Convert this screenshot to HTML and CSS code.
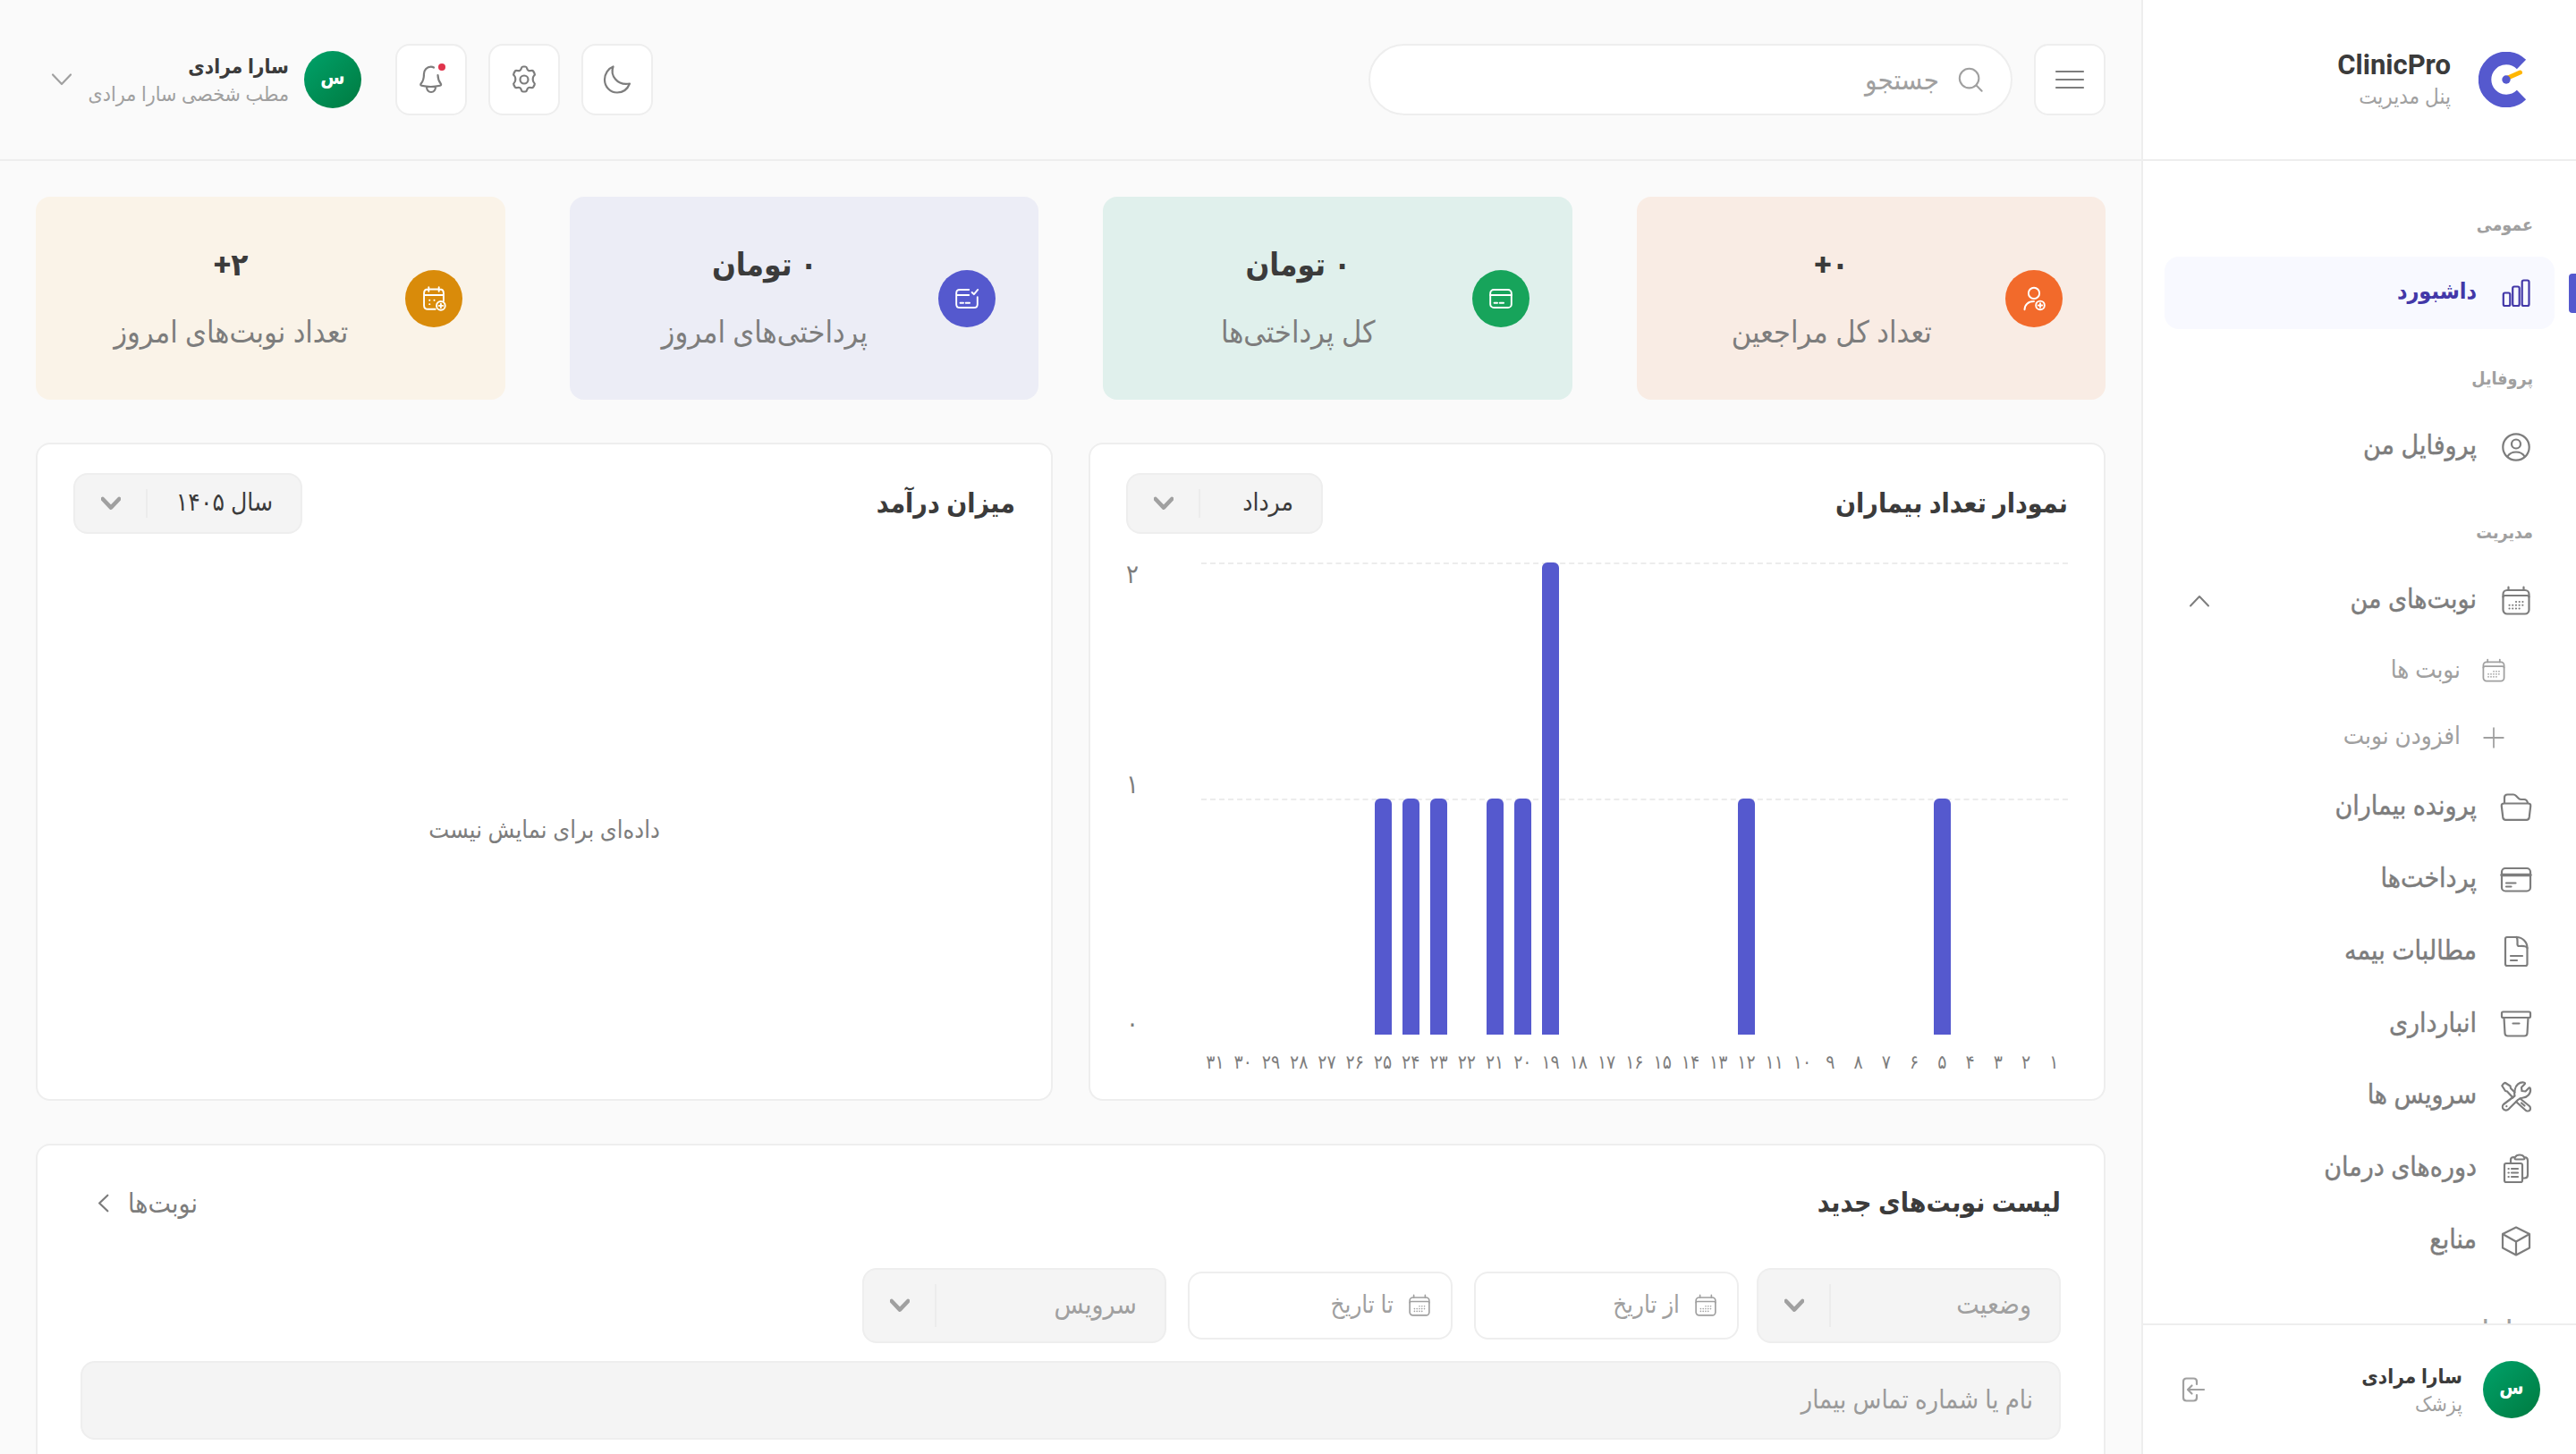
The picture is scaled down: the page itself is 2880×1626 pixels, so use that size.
FILE: index.html
```html
<!DOCTYPE html>
<html lang="fa" dir="rtl">
<head>
    <meta charset="UTF-8">
    <meta name="viewport" content="width=device-width, initial-scale=1.0">
    <title>ClinicPro</title>
    <link rel="stylesheet" href="styles.css">
</head>
<body>
    <!-- Icons -->
    <svg class="sprite" aria-hidden="true">
        <symbol id="i-chart" viewBox="0 0 40 40"><rect x="5.800" y="19.500" width="7.500" height="14.500" rx="1.800"/><rect x="16.200" y="12.500" width="7.500" height="21.500" rx="1.800"/><rect x="26.700" y="5.500" width="7.800" height="28.500" rx="1.800"/></symbol>
        <symbol id="i-profile" viewBox="0 0 40 40"><circle cx="20" cy="20" r="14.700"/><circle cx="20" cy="16.500" r="5"/><path d="M10.500 30.500C12.500 27 16 25.500 20 25.500s7.500 1.500 9.500 5"/></symbol>
        <symbol id="i-calendar" viewBox="0 0 40 40"><rect x="5.500" y="8" width="29" height="26.500" rx="4.500"/><path d="M11.500 4.500V8M28.500 4.500V8M5.500 15.500c0-1 1-1.500 2-1.500h25c1 0 2 .5 2 1.500"/><path class="dots" d="M12.500 28.500h11.500M12.500 24.800h15.500M20 21h8"/></symbol>
        <symbol id="i-plus" viewBox="0 0 40 40"><path d="M20 6.500v27M6.500 20h27"/></symbol>
        <symbol id="i-folder" viewBox="0 0 40 40"><path d="M7 15V9c0-2 1-3.500 3.500-3.500h6.500c1.500 0 2 .5 3 1.500l3 3c1 1 1.700 1 3 1h3c2.500 0 3.500 1.500 4 4"/><path d="M6.500 15.500h27c2 0 3 1 2.700 3l-1.500 12.500c-.3 2-1.200 2.800-3 2.800H8.300c-1.800 0-2.700-.8-3-2.800L3.800 18.500c-.3-2 .7-3 2.700-3z"/></symbol>
        <symbol id="i-card" viewBox="0 0 40 40"><rect x="4" y="7" width="32" height="25.500" rx="4"/><path class="thick" d="M4 14.500h32"/><path d="M9 23.500h10.500M9 27.500h5.500"/></symbol>
        <symbol id="i-file" viewBox="0 0 40 40"><path d="M10 4h10.500C27 4 32.500 9.500 32.500 16v18c0 1-.8 2-2 2H10c-1.200 0-2-1-2-2V6c0-1.200.8-2 2-2z"/><path d="M20.500 4c1.500 2 1 4 1 8 0 1.500.5 2 2 2 4 0 7.500-.5 9 2M14 25h13M14 30h7"/></symbol>
        <symbol id="i-box" viewBox="0 0 40 40"><rect x="4" y="6.500" width="32" height="6.500" rx="1.500"/><path d="M6.500 13l1 17.500c.1 2 1.200 3 3.200 3h18.600c2 0 3.100-1 3.200-3l1-17.500M16.500 19.500h7"/></symbol>
        <symbol id="i-tools" viewBox="0 0 40 40"><path d="M18.500 19.500c-.8-2.500-.3-4.500.2-7 .8-4.800 5-8.700 9.800-8 1.500.2 2 1 1 2l-3.500 3.500.5 4 4 .5 3.500-3.500c1-1 1.800-.5 2 1 .7 5-3.500 9-8 9.500-2.500.3-4 .5-6 2.500L11.500 34.500c-1.500 1.500-4 1.500-5.500 0s-1.500-4 0-5.500z"/><path d="M16.500 21.500l-6.500-7-2-.5L4.500 8.500c-.5-.8 2.500-4 3.500-3.500l5.500 3.500.5 2.500 4.500 4.500M24.500 22.500L35 31c1.500 1.500 1 4 .2 4.700-1.200 1.200-3.500 1-4.700-.2L20 26M26 27.500l3.500 3M9.300 31.200h.1"/></symbol>
        <symbol id="i-clipboard" viewBox="0 0 40 40"><rect x="7" y="14" width="20" height="21" rx="2"/><path d="M14 14v-4c0-2 1.500-3 3.500-3M29 7c2.500 0 4 1.500 4 4v16c0 2-1.500 3.500-3.500 3.500H27M20 9.500c-1.500 0-2-1-1-2.500 1-2 2.500-2.500 5-2.500s4 .5 5 2.500c.8 1.500.5 2.500-1 2.500zM11.500 20h.3M11.500 24.500h.3M11.500 29h.3M15 20h7M15 24.500h7M15 29h7"/></symbol>
        <symbol id="i-cube" viewBox="0 0 40 40"><path d="M20 4.500L35 12v15.500L20 35.500 5 27.500V12zM5 12l15 8.500L35 12M20 20.500v15"/></symbol>
        <symbol id="i-logout" viewBox="0 0 32 32"><path d="M20 10V7c0-2-1-3.500-3.500-3.500H8.500C6 3.500 5 5 5 7v18c0 2 1 3.500 3.500 3.500h8c2.500 0 3.500-1.500 3.500-3.500v-3M28 16H10.500M14.500 11.500L10 16l4.500 4.500"/></symbol>
        <symbol id="i-menu" viewBox="0 0 40 40"><path d="M5 11h30M5 20h30M5 29h30"/></symbol>
        <symbol id="i-search" viewBox="0 0 32 32"><circle cx="14.500" cy="14.500" r="11.500"/><path d="M23 23l6.500 6.500"/></symbol>
        <symbol id="i-moon" viewBox="0 0 32 32"><path d="M11.500 1.500C8 11 15.500 23 30 20.500 27 28 21.500 30.500 16 30.500 8 30.500 2 24 2 16 2 9.500 6 3.500 11.500 1.500z"/></symbol>
        <symbol id="i-gear" viewBox="0 0 32 32"><circle cx="16" cy="16" r="4.500"/><path d="M12.800 3.500c.3-1.200.8-2 2-2h2.400c1.200 0 1.700.8 2 2 .5 2.200 2.200 3.200 4.300 2.500 1.200-.4 2.100-.4 2.700.6l1.400 2.500c.6 1 .2 1.800-.7 2.600-1.600 1.500-1.600 6.100 0 7.600.9.800 1.300 1.600.7 2.600l-1.400 2.500c-.6 1-1.500 1-2.700.6-2.100-.7-3.800.3-4.300 2.500-.3 1.200-.8 2-2 2h-2.400c-1.200 0-1.700-.8-2-2-.5-2.200-2.200-3.200-4.300-2.500-1.200.4-2.100.4-2.700-.6l-1.400-2.500c-.6-1-.2-1.800.7-2.600 1.600-1.500 1.600-6.100 0-7.600-.9-.8-1.300-1.600-.7-2.600l1.400-2.500c.6-1 1.500-1 2.700-.6 2.100.7 3.800-.3 4.300-2.500z"/></symbol>
        <symbol id="i-bell" viewBox="0 0 32 32"><path d="M19 2.500c-1-.6-2-.9-3.200-.9-4.500 0-7.800 3.700-7.800 7.900 0 6-1 8.500-3.300 11-.8 1-.5 2 .7 2.300 6.500 1.500 14 1.500 20.500 0 1.300-.3 1.600-1.300.8-2.300-2-2.400-3-5-3.200-9.500M11 24.500c.3 3.500 2 5.500 5 5.500s4.700-2 5-5.500"/></symbol>
        <symbol id="i-down" viewBox="0 0 24 24"><path d="M2 6.500l10 10.500 10-10.500"/></symbol>
        <symbol id="i-user-add" viewBox="0 0 32 32"><circle cx="16" cy="9" r="7"/><path d="M4 30c0-6 4.500-10.500 12-10.500"/><circle cx="24" cy="24.500" r="5.500"/><path d="M24 22v5M21.500 24.500h5"/></symbol>
        <symbol id="i-wallet" viewBox="0 0 32 32"><rect x="2.500" y="4.500" width="27" height="23" rx="4.500"/><path d="M2.500 11.500h27M7.500 21.500h4M14.500 21.500h5"/></symbol>
        <symbol id="i-wallet-check" viewBox="0 0 32 32"><path d="M18.500 4.500H7c-3 0-4.500 1.500-4.500 4.500v14c0 3 1.500 4.500 4.500 4.500h18c3 0 4.500-1.500 4.500-4.500v-9M2.500 11.500h16M7.500 21.500h4M14.500 21.500h5M22.500 8l2.500 2.500 5-6"/></symbol>
        <symbol id="i-calendar-add" viewBox="0 0 32 32"><path d="M18 29.500H8.500c-3 0-5-2-5-5V9c0-3 2-5 5-5h15c3 0 5 2 5 5v10M9.500 1.500v5M22.500 1.500v5M3.500 11.500h25M10.500 18h.2M16.500 18h.2M10.500 23h.2"/><circle cx="25" cy="25" r="5.500"/><path d="M25 22.500v5M22.500 25h5"/></symbol>
    </svg>

    <div class="layout">
        <aside class="sidebar">
            <div class="brand">
                <svg class="brand-logo" viewBox="-31 -31 62 62"><path d="M17 -17A24 24 0 1 0 17 17" fill="none" stroke="#5559ce" stroke-width="14.500"/><path d="M3 -2.500L15.500 -8" stroke="#ffb600" stroke-width="5" stroke-linecap="round"/><circle r="4.700" fill="#5559ce"/></svg>
                <div class="brand-text">
                    <span class="brand-name">ClinicPro</span>
                    <span class="brand-sub">پنل مدیریت</span>
                </div>
            </div>

            <nav class="nav">
                <h6 class="nav-title">عمومی</h6>
                <a class="nav-item active"><svg><use href="#i-chart"/></svg><span>داشبورد</span></a>
                <h6 class="nav-title">پروفایل</h6>
                <a class="nav-item"><svg><use href="#i-profile"/></svg><span>پروفایل من</span></a>
                <h6 class="nav-title">مدیریت</h6>
                <a class="nav-item"><svg><use href="#i-calendar"/></svg><span>نوبت‌های من</span><svg class="caret"><use href="#i-down"/></svg></a>
                <div class="nav-sub">
                    <a class="nav-subitem"><svg><use href="#i-calendar"/></svg><span>نوبت ها</span></a>
                    <a class="nav-subitem"><svg><use href="#i-plus"/></svg><span>افزودن نوبت</span></a>
                </div>
                <a class="nav-item"><svg><use href="#i-folder"/></svg><span>پرونده بیماران</span></a>
                <a class="nav-item"><svg><use href="#i-card"/></svg><span>پرداخت‌ها</span></a>
                <a class="nav-item"><svg><use href="#i-file"/></svg><span>مطالبات بیمه</span></a>
                <a class="nav-item"><svg><use href="#i-box"/></svg><span>انبارداری</span></a>
                <a class="nav-item"><svg><use href="#i-tools"/></svg><span>سرویس ها</span></a>
                <a class="nav-item"><svg><use href="#i-clipboard"/></svg><span>دوره‌های درمان</span></a>
                <a class="nav-item"><svg><use href="#i-cube"/></svg><span>منابع</span></a>
                <h6 class="nav-title">تنظیمات</h6>
            </nav>

            <div class="sidebar-user">
                <div class="avatar">س</div>
                <div class="user-text">
                    <span class="user-name">سارا مرادی</span>
                    <span class="user-role">پزشک</span>
                </div>
                <svg class="logout"><use href="#i-logout"/></svg>
            </div>
        </aside>

        <div class="main">
            <header class="topbar">
                <button class="icon-btn menu-btn"><svg><use href="#i-menu"/></svg></button>
                <div class="search"><svg><use href="#i-search"/></svg><span>جستجو</span></div>
                <div class="actions">
                    <button class="icon-btn"><svg><use href="#i-moon"/></svg></button>
                    <button class="icon-btn"><svg><use href="#i-gear"/></svg></button>
                    <button class="icon-btn"><svg><use href="#i-bell"/></svg><i class="badge"></i></button>
                </div>
                <div class="account">
                    <div class="avatar">س</div>
                    <div class="user-text">
                        <span class="user-name">سارا مرادی</span>
                        <span class="user-role">مطب شخصی سارا مرادی</span>
                    </div>
                    <svg class="account-caret"><use href="#i-down"/></svg>
                </div>
            </header>

            <main class="content">
                <section class="stats">
                    <div class="stat orange">
                        <div class="stat-icon"><svg><use href="#i-user-add"/></svg></div>
                        <div class="stat-text"><strong>۰+</strong><span>تعداد کل مراجعین</span></div>
                    </div>
                    <div class="stat green">
                        <div class="stat-icon"><svg><use href="#i-wallet"/></svg></div>
                        <div class="stat-text"><strong>۰ تومان</strong><span>کل پرداختی‌ها</span></div>
                    </div>
                    <div class="stat purple">
                        <div class="stat-icon"><svg><use href="#i-wallet-check"/></svg></div>
                        <div class="stat-text"><strong>۰ تومان</strong><span>پرداختی‌های امروز</span></div>
                    </div>
                    <div class="stat yellow">
                        <div class="stat-icon"><svg><use href="#i-calendar-add"/></svg></div>
                        <div class="stat-text"><strong>۲+</strong><span>تعداد نوبت‌های امروز</span></div>
                    </div>
                </section>

                <section class="panels">
                    <div class="panel">
                        <div class="panel-head">
                            <h2>نمودار تعداد بیماران</h2>
                            <div class="select month"><span>مرداد</span><i></i><svg><use href="#i-down"/></svg></div>
                        </div>
                        <div class="chart">
                            <div class="plot">
                                <svg class="grid"><path d="M0 1h969M0 265h969"/></svg>
                                <div class="bars" id="bars"></div>
                                <div class="days" id="days"></div>
                            </div>
                            <div class="y-axis"><span>۲</span><span>۱</span><span>۰</span></div>
                        </div>
                    </div>
                    <div class="panel">
                        <div class="panel-head">
                            <h2>میزان درآمد</h2>
                            <div class="select year"><span>سال ۱۴۰۵</span><i></i><svg><use href="#i-down"/></svg></div>
                        </div>
                        <div class="empty">داده‌ای برای نمایش نیست</div>
                    </div>
                </section>

                <section class="list">
                    <div class="list-head">
                        <h2>لیست نوبت‌های جدید</h2>
                        <a class="more"><span>نوبت‌ها</span><svg><use href="#i-down"/></svg></a>
                    </div>
                    <div class="filters">
                        <div class="select large"><span>وضعیت</span><i></i><svg><use href="#i-down"/></svg></div>
                        <div class="date from"><svg><use href="#i-calendar"/></svg><span>از تاریخ</span></div>
                        <div class="date to"><svg><use href="#i-calendar"/></svg><span>تا تاریخ</span></div>
                        <div class="select large"><span>سرویس</span><i></i><svg><use href="#i-down"/></svg></div>
                    </div>
                    <div class="patient-search">نام یا شماره تماس بیمار</div>
                </section>
            </main>
        </div>
    </div>

    <script>
        const visits = { 5: 1, 12: 1, 19: 2, 20: 1, 21: 1, 23: 1, 24: 1, 25: 1 };
        const maxVisits = 2;
        const bars = document.getElementById("bars");
        const days = document.getElementById("days");

        for (let day = 1; day <= 31; day++) {
            const height = (visits[day] || 0) / maxVisits * 100;
            bars.innerHTML += `<div class="slot"><div class="bar" style="height: ${height}%"></div></div>`;
            days.innerHTML += `<span>${day.toLocaleString("fa-IR")}</span>`;
        }
    </script>
</body>
</html>
```

FILE: styles.css
```css
* {
    box-sizing: border-box;
}
body {
    margin: 0;
    height: 1626px;
    overflow: hidden;
    background: #fafafa;
    color: #3b3b3b;
    font-family: Roboto, "DejaVu Sans Condensed", "DejaVu Sans", sans-serif;
    font-size: 29px;
}
h2, h6 {
    margin: 0;
}
svg {
    fill: none;
    stroke: currentColor;
    stroke-width: 2.2;
    stroke-linecap: round;
    stroke-linejoin: round;
    flex-shrink: 0;
}
.sprite {
    display: none;
}
.dots {
    stroke-dasharray: 0.1 3.6;
    stroke-width: 2.1;
}
.thick {
    stroke-width: 3.4;
}
.layout {
    display: flex;
    height: 1626px;
}

/* Sidebar */
.sidebar {
    width: 486px;
    flex-shrink: 0;
    display: flex;
    flex-direction: column;
    background: #fff;
    border-left: 2px solid #eee;
}
.brand {
    height: 180px;
    flex-shrink: 0;
    display: flex;
    align-items: center;
    gap: 31px;
    padding: 0 47px 0 0;
    border-bottom: 2px solid #eee;
}
.brand-logo {
    width: 62px;
    height: 62px;
    stroke: none;
    stroke-linecap: butt;
}
.brand-text, .user-text {
    display: flex;
    flex-direction: column;
}
.brand-name {
    font-size: 31px;
    font-weight: 700;
    line-height: 38px;
}
.brand-sub {
    font-size: 24px;
    line-height: 32px;
    color: #a0a0a0;
}
.nav {
    flex: 1;
    min-height: 0;
    overflow: hidden;
    padding: 16px 24px 0;
}
.nav-title {
    height: 91.2px;
    padding: 38px 24px 0 0;
    font-size: 19.500px;
    font-weight: 700;
    line-height: 36px;
    color: #a0a0a0;
}
.nav-item {
    position: relative;
    display: flex;
    align-items: center;
    height: 80.8px;
    gap: 24px;
    padding: 0 23px;
    border-radius: 16px;
    color: #7d7d7d;
    font-size: 30px;
    -webkit-text-stroke: 0.4px;
}
.nav-item svg {
    width: 40px;
    height: 40px;
}
.nav-item span, .nav-subitem span {
    margin-top: -4px;
}
.nav-item.active {
    background: #f8f9ff;
    color: #4338a8;
    font-size: 25px;
    font-weight: 700;
    -webkit-text-stroke: 0;
}
.nav-item.active::before {
    content: "";
    position: absolute;
    right: -24px;
    top: 19px;
    width: 8px;
    height: 44px;
    border-radius: 4px 0 0 4px;
    background: #5559ce;
}
.nav-item .caret {
    width: 24px;
    height: 24px;
    margin: 0 auto 0 4px;
    transform: rotate(180deg);
    stroke-width: 2;
}
.nav-sub {
    padding: 1px 52px 0 0;
    height: 150.400px;
}
.nav-subitem {
    display: flex;
    align-items: center;
    gap: 21px;
    height: 74.500px;
    color: #a0a0a0;
    font-size: 27.500px;
}
.nav-subitem svg {
    width: 32px;
    height: 32px;
}
.sidebar-user {
    height: 146px;
    flex-shrink: 0;
    display: flex;
    align-items: center;
    gap: 23px;
    padding: 0 40px;
    border-top: 2px solid #eee;
}
.avatar {
    width: 64px;
    height: 64px;
    flex-shrink: 0;
    border-radius: 50%;
    background: linear-gradient(135deg, #00a26a, #007a40);
    color: #fff;
    font-size: 22px;
    font-weight: 700;
    line-height: 60px;
    text-align: center;
}
.user-name {
    font-size: 22.500px;
    font-weight: 700;
    line-height: 34px;
}
.user-role {
    font-size: 23px;
    line-height: 30px;
    color: #a0a0a0;
}
.logout {
    width: 32px;
    height: 32px;
    margin: 0 auto 0 0;
    color: #a0a0a0;
}

/* Top bar */
.main {
    flex: 1;
    min-width: 0;
}
.topbar {
    height: 180px;
    display: flex;
    align-items: center;
    gap: 24px;
    padding: 0 40px;
    border-bottom: 2px solid #eee;
}
.icon-btn {
    position: relative;
    width: 80px;
    height: 80px;
    display: flex;
    align-items: center;
    justify-content: center;
    padding: 0;
    border: 2px solid #eee;
    border-radius: 16px;
    background: #fff;
    color: #7d7d7d;
}
.icon-btn svg {
    width: 32px;
    height: 32px;
}
.icon-btn.menu-btn svg {
    width: 40px;
    height: 40px;
}
.badge {
    position: absolute;
    top: 20px;
    left: 46px;
    width: 8px;
    height: 8px;
    border-radius: 50%;
    background: #e0344c;
}
.search {
    width: 720px;
    height: 80px;
    display: flex;
    align-items: center;
    gap: 20px;
    padding: 0 30px;
    border: 2px solid #eee;
    border-radius: 40px;
    background: #fff;
    color: #a0a0a0;
    font-size: 31px;
}
.search svg {
    width: 30px;
    height: 30px;
}
.actions {
    display: flex;
    gap: 24px;
    margin-right: auto;
}
.account {
    width: 364px;
    display: flex;
    align-items: center;
    gap: 17px;
    margin-right: 14px;
}
.account-caret {
    width: 24px;
    height: 24px;
    margin: 0 auto 0 17px;
    color: #a0a0a0;
}

/* Stat cards */
.content {
    padding: 40px;
}
.stats {
    display: grid;
    grid-template-columns: repeat(4, 1fr);
    gap: 72px;
}
.stat {
    height: 227px;
    display: flex;
    align-items: center;
    gap: 24px;
    padding: 0 48px;
    border-radius: 16px;
}
.stat-icon {
    width: 64px;
    height: 64px;
    display: flex;
    align-items: center;
    justify-content: center;
    border-radius: 50%;
    color: #fff;
}
.stat-icon svg {
    width: 28px;
    height: 28px;
}
.stat-text {
    flex: 1;
    display: flex;
    flex-direction: column;
    align-items: center;
    white-space: nowrap;
}
.stat-text strong {
    font-size: 35px;
    line-height: 74px;
}
.stat-text span {
    font-size: 34px;
    line-height: 74px;
    color: #7d7d7d;
}
.orange {
    background: #f9ece4;
}
.orange .stat-icon {
    background: #f26a2b;
}
.green {
    background: #e0f0ec;
}
.green .stat-icon {
    background: #17a45b;
}
.purple {
    background: #ecedf6;
}
.purple .stat-icon {
    background: #5559ce;
}
.yellow {
    background: #faf3e8;
}
.yellow .stat-icon {
    background: #d98b0a;
}

/* Panels */
.panels {
    display: grid;
    grid-template-columns: 1fr 1fr;
    gap: 40px;
    margin-top: 48px;
}
.panel {
    height: 736px;
    display: flex;
    flex-direction: column;
    padding: 32px 40px;
    border: 2px solid #eee;
    border-radius: 16px;
    background: #fff;
}
.panel-head, .list-head {
    display: flex;
    align-items: center;
    justify-content: space-between;
}
h2 {
    font-size: 30px;
    line-height: 68px;
}
.select {
    height: 68px;
    display: flex;
    align-items: center;
    padding: 0 31px 0 29px;
    border: 2px solid #eee;
    border-radius: 16px;
    background: #f4f4f4;
}
.select span {
    flex: 1;
    margin-top: -4px;
}
.select i {
    width: 2px;
    height: 32px;
    margin-left: 28px;
    background: #ececec;
}
.select svg {
    width: 22px;
    height: 22px;
    stroke-width: 5;
    color: #a0a0a0;
}
.month {
    width: 220px;
    font-size: 28px;
}
.year {
    width: 256px;
    font-size: 28px;
}
.chart {
    display: flex;
    justify-content: space-between;
    margin-top: 32px;
}
.plot {
    position: relative;
    width: 969px;
}
.grid {
    position: absolute;
    top: 0;
    right: 0;
    width: 969px;
    height: 528px;
    stroke: #ececec;
    stroke-width: 2;
    stroke-linecap: butt;
    stroke-dasharray: 6 4.03;
}
.bars {
    position: relative;
    display: flex;
    height: 528px;
}
.slot {
    flex: 1;
    display: flex;
    align-items: flex-end;
    justify-content: center;
}
.bar {
    width: 19px;
    border-radius: 6px 6px 0 0;
    background: #5559ce;
}
.days {
    display: flex;
    padding-top: 17px;
    font-size: 21px;
    line-height: 28px;
    color: #7d7d7d;
}
.days span {
    flex: 1;
    text-align: center;
}
.y-axis {
    display: flex;
    flex-direction: column;
    justify-content: space-between;
    height: 528px;
    line-height: 26px;
    direction: ltr;
    color: #7d7d7d;
}
.y-axis span:nth-child(2) {
    margin-bottom: 32px;
}
.empty {
    flex: 1;
    display: flex;
    align-items: center;
    justify-content: center;
    padding-top: 62px;
    font-size: 27px;
    color: #7d7d7d;
}

/* Appointment list */
.list {
    height: 500px;
    margin-top: 48px;
    padding: 30px 48px;
    border: 2px solid #eee;
    border-radius: 16px;
    background: #fff;
}
.more {
    display: flex;
    align-items: center;
    gap: 17px;
    padding-left: 15px;
    color: #7d7d7d;
    font-size: 30px;
}
.more svg {
    width: 21px;
    height: 21px;
    stroke-width: 2.6;
    transform: rotate(90deg);
}
.filters {
    display: flex;
    align-items: center;
    margin-top: 39px;
    color: #a0a0a0;
    font-size: 30px;
}
.select.large {
    width: 340px;
    height: 84px;
}
.large i {
    height: 48px;
}
.date {
    width: 296px;
    height: 76px;
    display: flex;
    align-items: center;
    gap: 14px;
    padding: 0 20px;
    border: 2px solid #eee;
    border-radius: 16px;
    font-size: 27.500px;
}
.date span {
    margin-top: -4px;
}
.date svg {
    width: 30px;
    height: 30px;
}
.from {
    margin: 0 20px 0 24px;
}
.to {
    margin-left: 24px;
}
.patient-search {
    height: 88px;
    margin-top: 20px;
    padding: 0 29px;
    border: 2px solid #eee;
    border-radius: 16px;
    background: #f4f4f4;
    color: #9a9a9a;
    line-height: 82px;
}
```
